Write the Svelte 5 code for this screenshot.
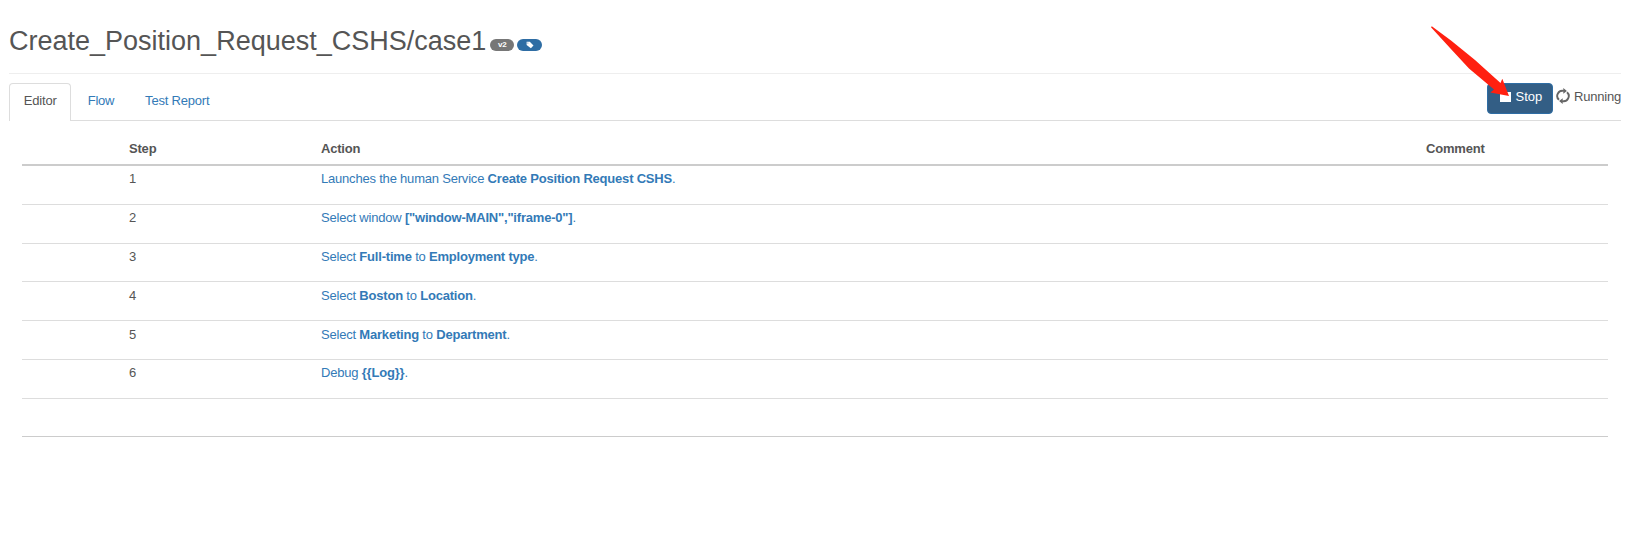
<script>
  const rows = [
    { h: 39, top: 3, parts: [['Launches the human Service '], ['Create Position Request CSHS', 1], ['.']] },
    { h: 39, top: 3, parts: [['Select window '], ['["window-MAIN","iframe-0"]', 1], ['.']] },
    { h: 38, top: 3, parts: [['Select '], ['Full-time', 1], [' to '], ['Employment type', 1], ['.']] },
    { h: 39, top: 4, parts: [['Select '], ['Boston', 1], [' to '], ['Location', 1], ['.']] },
    { h: 39, top: 4, parts: [['Select '], ['Marketing', 1], [' to '], ['Department', 1], ['.']] },
    { h: 39, top: 3, parts: [['Debug '], ['{{Log}}', 1], ['.']] }
  ];
</script>

<main>
  <header>
    <h1>Create_Position_Request_CSHS/case1</h1>
    <span class="badge">v2</span>
    <span class="badge tag">
      <svg width="8" height="8" viewBox="0 0 8 8"><path d="M.6.8h3.200L7.500 4.600 4.900 7.200.6 3.900z" fill="#fff" /><circle cx="1.900" cy="2.100" r=".5" fill="#2e6da4" /></svg>
    </span>
  </header>

  <nav>
    <a class="active" href="#editor">Editor</a>
    <a href="#flow">Flow</a>
    <a href="#report">Test Report</a>
    <div class="run">
      <button><i></i>Stop</button>
      <svg width="14" height="16" viewBox="0 0 14 16" fill="none" stroke="#666" stroke-width="1.900">
        <path d="M3 11.800A5.200 5.200 0 0 1 7.800 2.900M11 4.200A5.200 5.200 0 0 1 6.200 13.100" />
        <path d="M7.300 0 10.900 2.900 7.300 5.800zM6.700 10.200 3.100 13.100 6.700 16z" fill="#666" stroke="none" />
      </svg>
      <span>Running</span>
    </div>
  </nav>

  <section>
    <div class="row head"><span></span><b>Step</b><b>Action</b><b>Comment</b></div>
    {#each rows as row, i}
      <div class="row" style:height="{row.h}px" style:padding-top="{row.top}px">
        <span></span>
        <span>{i + 1}</span>
        <a href="#step">{#each row.parts as [text, bold]}{#if bold}<b>{text}</b>{:else}{text}{/if}{/each}</a>
        <span></span>
      </div>
    {/each}
    <div class="row last"></div>
  </section>

  <svg class="arrow" width="82" height="74" viewBox="0 0 82 74"><path d="M.8.3 0 1.300 19 22 38 42.500 63 63.500 59.300 66.500 78 70 71.300 52.700 69.500 57 44 34 20 14.500Z" fill="#ff2010" /></svg>
</main>

<style>
  :global(body) { background: #fff; }
  main {
    position: relative;
    box-sizing: border-box;
    height: 541px;
    padding: 0 5px 0 9px;
    overflow: hidden;
    font: 13px/19px "Liberation Sans", Arial, sans-serif;
    letter-spacing: -0.2px;
    color: #555;
  }
  a { color: #337ab7; text-decoration: none; }
  header {
    box-sizing: border-box;
    height: 74px;
    display: flex;
    align-items: flex-start;
    border-bottom: 1px solid #eee;
  }
  h1 { margin: 25px 4px 0 0; font-size: 27px; line-height: 32px; font-weight: 400; letter-spacing: 0; white-space: nowrap; }
  .badge {
    box-sizing: border-box;
    width: 24px;
    height: 12px;
    margin: 39px 3px 0 0;
    border-radius: 6px;
    background: #777;
    color: #fff;
    font-size: 8px;
    line-height: 12px;
    font-weight: 700;
    text-align: center;
  }
  .tag { width: 25px; background: #2e6da4; display: flex; align-items: center; justify-content: center; }
  nav { display: flex; margin-top: 9px; height: 37px; border-bottom: 1px solid #ddd; }
  nav a { box-sizing: border-box; height: 37px; padding: 7px 13.500px 0; border: 1px solid transparent; margin-right: 1.800px; white-space: nowrap; }
  nav a.active { height: 38px; color: #555; background: #fff; border: 1px solid #ddd; border-bottom: 0; border-radius: 4px 4px 0 0; }
  .run { margin-left: auto; display: flex; align-items: flex-start; }
  button {
    box-sizing: border-box;
    display: flex;
    align-items: center;
    gap: 5px;
    width: 66px;
    height: 31px;
    padding: 0 0 4px 12px;
    border: 1px solid #2e6da4;
    border-radius: 4px;
    background: #335e85;
    color: #fff;
    font: inherit;
  }
  i { width: 11px; height: 10px; background: #fff; }
  .run svg { margin: 5px 4.400px 0 3px; }
  .run span { margin-top: 4px; white-space: nowrap; }
  section { margin: 0 13px; padding-top: 17px; }
  .row { box-sizing: border-box; display: grid; grid-template-columns: 107px 192px 1105px 1fr; border-bottom: 1px solid #ddd; white-space: nowrap; }
  .head { height: 28px; padding-top: 1px; border-bottom: 2px solid #ccc; }
  .last { height: 38px; border-bottom-color: #ccc; }
  .arrow { position: absolute; left: 1431px; top: 26px; }
  nav a.active { padding: 7px 13.800px 0; }
</style>
